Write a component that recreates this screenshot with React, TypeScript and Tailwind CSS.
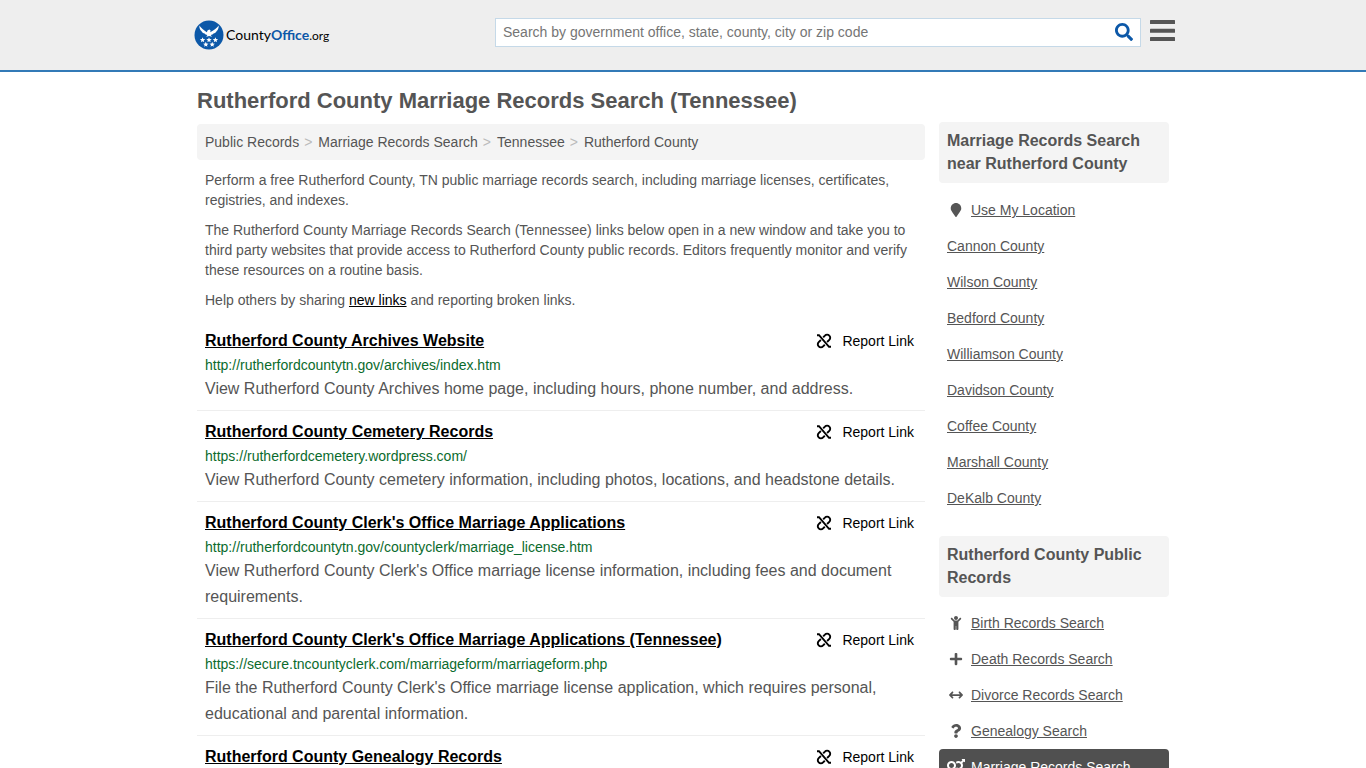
import type { ReactNode } from 'react';
import { FaChild, FaMapMarker, FaPlus, FaQuestion, FaSearch, FaVenusMars } from 'react-icons/fa';
import { FaArrowsLeftRight } from 'react-icons/fa6';

interface RecordLink {
  title: string;
  url: string;
  description?: string;
}

const records: RecordLink[] = [
  {
    title: 'Rutherford County Archives Website',
    url: 'http://rutherfordcountytn.gov/archives/index.htm',
    description: 'View Rutherford County Archives home page, including hours, phone number, and address.',
  },
  {
    title: 'Rutherford County Cemetery Records',
    url: 'https://rutherfordcemetery.wordpress.com/',
    description: 'View Rutherford County cemetery information, including photos, locations, and headstone details.',
  },
  {
    title: "Rutherford County Clerk's Office Marriage Applications",
    url: 'http://rutherfordcountytn.gov/countyclerk/marriage_license.htm',
    description: "View Rutherford County Clerk's Office marriage license information, including fees and document requirements.",
  },
  {
    title: "Rutherford County Clerk's Office Marriage Applications (Tennessee)",
    url: 'https://secure.tncountyclerk.com/marriageform/marriageform.php',
    description: "File the Rutherford County Clerk's Office marriage license application, which requires personal, educational and parental information.",
  },
  { title: 'Rutherford County Genealogy Records', url: '' },
];

const counties = [
  'Cannon County',
  'Wilson County',
  'Bedford County',
  'Williamson County',
  'Davidson County',
  'Coffee County',
  'Marshall County',
  'DeKalb County',
];

const publicRecords = [
  { label: 'Birth Records Search', icon: <FaChild /> },
  { label: 'Death Records Search', icon: <FaPlus /> },
  { label: 'Divorce Records Search', icon: <FaArrowsLeftRight /> },
  { label: 'Genealogy Search', icon: <FaQuestion /> },
  { label: 'Marriage Records Search', icon: <FaVenusMars className="size-[18px]" />, active: true },
];

const crumbs = ['Public Records', 'Marriage Records Search', 'Tennessee', 'Rutherford County'];

const star = 'M0-2.8.75-.9 2.7-.85 1.15.4 1.65 2.3 0 1.2-1.65 2.3-1.15.4-2.7-.85-.75-.9Z';

function Logo() {
  return (
    <a href="#" className="flex items-center gap-0.5 text-sm text-black">
      <svg viewBox="0 0 30 30" className="size-[30px]" aria-hidden="true">
        <circle cx="15" cy="15" r="14.5" fill="#0c58a8" />
        <g fill="#fff">
          <path d="M5.300 5.500C7.500 8.600 10 10.200 12.800 12.200L13.700 10.300 15.500 9.600 16.600 10.500 16.200 12.200C19.800 10.200 22.500 8.600 24.800 5.500 24.700 8.500 23.800 10 22.700 11 22 12.500 20.800 13.300 19.500 13.600 18.600 14.700 17.600 15.100 16.700 15L18 16.700 15.100 16 12.200 16.700 13.400 15C12.400 15.100 11.500 14.700 10.600 13.600 9.200 13.300 8.100 12.500 7.400 11 6.200 10 5.400 8.500 5.300 5.500Z" />
          <path d={star} transform="translate(8.600 20)" />
          <path d={star} transform="translate(15 20)" />
          <path d={star} transform="translate(21.400 20)" />
          <path d={star} transform="translate(11.800 24.500)" />
          <path d={star} transform="translate(18.200 24.500)" />
        </g>
      </svg>
      <span className="font-['Lato',sans-serif]">
        County<b className="text-[#0c58a8]">Office</b><span className="text-xs">.org</span>
      </span>
    </a>
  );
}

function MenuIcon() {
  return (
    <svg viewBox="0 0 28 28" className="size-7" fill="currentColor" aria-hidden="true">
      <rect x="1" y="3" width="25" height="4" rx="0.500" />
      <rect x="1" y="11.700" width="25" height="4" rx="0.500" />
      <rect x="1" y="20" width="25" height="4" rx="0.500" />
    </svg>
  );
}

function BrokenLinkIcon() {
  return (
    <svg viewBox="0 0 16 16" className="size-4" fill="none" stroke="currentColor" strokeWidth="1.9" aria-hidden="true">
      <path d="M1 2.200H3L13 13.800H15" />
      <path d="M7.200 4.300 8.900 2.600a3 3 0 0 1 4.400 0 3 3 0 0 1 0 4.300L11.100 9" />
      <path d="M8.800 11.800 7.100 13.400a3 3 0 0 1-4.400 0 3 3 0 0 1 0-4.300L4.900 7" />
    </svg>
  );
}

function SideHeading({ children }: { children: ReactNode }) {
  return <h2 className="rounded bg-[#f4f4f4] px-2 pt-[7px] pb-2 text-base leading-[23px] font-bold">{children}</h2>;
}

function SideLink({ label, icon, active }: { label: string; icon?: ReactNode; active?: boolean }) {
  return (
    <li>
      <a
        href="#"
        className={`flex h-9 items-center rounded px-2 ${active ? 'bg-[#505050] text-white' : ''}`}
      >
        {icon && <span className="mr-1.5 flex w-[18px] justify-center">{icon}</span>}
        <span className="underline">{label}</span>
      </a>
    </li>
  );
}

function RecordItem({ record }: { record: RecordLink }) {
  return (
    <li className="border-b border-[#eee] px-2 pt-[9px] pb-2">
      <div className="mb-px flex items-center justify-between pr-[3px]">
        <h2 className="text-base leading-6 font-bold text-black">
          <a href="#" className="underline">{record.title}</a>
        </h2>
        <a href="#" className="flex items-center gap-2.5 text-black">
          <BrokenLinkIcon />
          Report Link
        </a>
      </div>
      {record.url && <p className="leading-[22px] text-[#0b6b2d]">{record.url}</p>}
      {record.description && <p className="text-base leading-[26px]">{record.description}</p>}
    </li>
  );
}

export default function App() {
  return (
    <div className="h-screen overflow-hidden bg-white font-['Liberation_Sans',Arial,sans-serif] text-sm leading-5 text-[#555]">
      <header className="border-b-2 border-[#337ab7] bg-[#eee]">
        <div className="mx-auto flex h-[70px] max-w-[988px] items-center justify-between pl-[5px]">
          <Logo />
          <div className="flex items-center gap-2 pb-2">
            <form className="mt-0.5 flex h-[29px] w-[646px] items-center border border-[#c5d9e8] bg-white">
              <input
                type="text"
                aria-label="Search"
                placeholder="Search by government office, state, county, city or zip code"
                className="h-full min-w-0 flex-1 px-[7px] outline-none placeholder:text-[#757575]"
              />
              <button type="submit" aria-label="Submit search" className="px-[7px] text-[#0c58a8]">
                <FaSearch className="size-[18px]" />
              </button>
            </form>
            <button type="button" aria-label="Menu">
              <MenuIcon />
            </button>
          </div>
        </div>
      </header>

      <main className="mx-auto max-w-[988px] px-2">
        <h1 className="pt-[15px] text-[22px] leading-7 font-bold">Rutherford County Marriage Records Search (Tennessee)</h1>
        <div className="flex gap-3.5 pt-[7px]">
          <section className="min-w-0 flex-1 pt-0.5">
            <nav className="flex rounded bg-[#f4f4f4] p-2">
              {crumbs.map((crumb, i) => (
                <span key={crumb}>
                  {i > 0 && <span className="pr-1.5 pl-[5px] text-[#bbb]">&gt;</span>}
                  <a href="#">{crumb}</a>
                </span>
              ))}
            </nav>
            <div className="space-y-2.5 px-2 pt-2.5 pb-2">
              <p>
                Perform a free Rutherford County, TN public marriage records search, including marriage licenses,
                certificates, registries, and indexes.
              </p>
              <p>
                The Rutherford County Marriage Records Search (Tennessee) links below open in a new window and take you
                to third party websites that provide access to Rutherford County public records. Editors frequently
                monitor and verify these resources on a routine basis.
              </p>
              <p>
                Help others by sharing <a href="#" className="text-black underline">new links</a> and reporting broken
                links.
              </p>
            </div>
            <ul className="pt-0.5">
              {records.map((record) => (
                <RecordItem key={record.title} record={record} />
              ))}
            </ul>
          </section>

          <aside className="w-[230px] shrink-0">
            <SideHeading>Marriage Records Search near Rutherford County</SideHeading>
            <ul className="pt-[9px] pb-5">
              <SideLink label="Use My Location" icon={<FaMapMarker />} />
              {counties.map((county) => (
                <SideLink key={county} label={county} />
              ))}
            </ul>
            <SideHeading>Rutherford County Public Records</SideHeading>
            <ul className="pt-2">
              {publicRecords.map((item) => (
                <SideLink key={item.label} {...item} />
              ))}
            </ul>
          </aside>
        </div>
      </main>
    </div>
  );
}
